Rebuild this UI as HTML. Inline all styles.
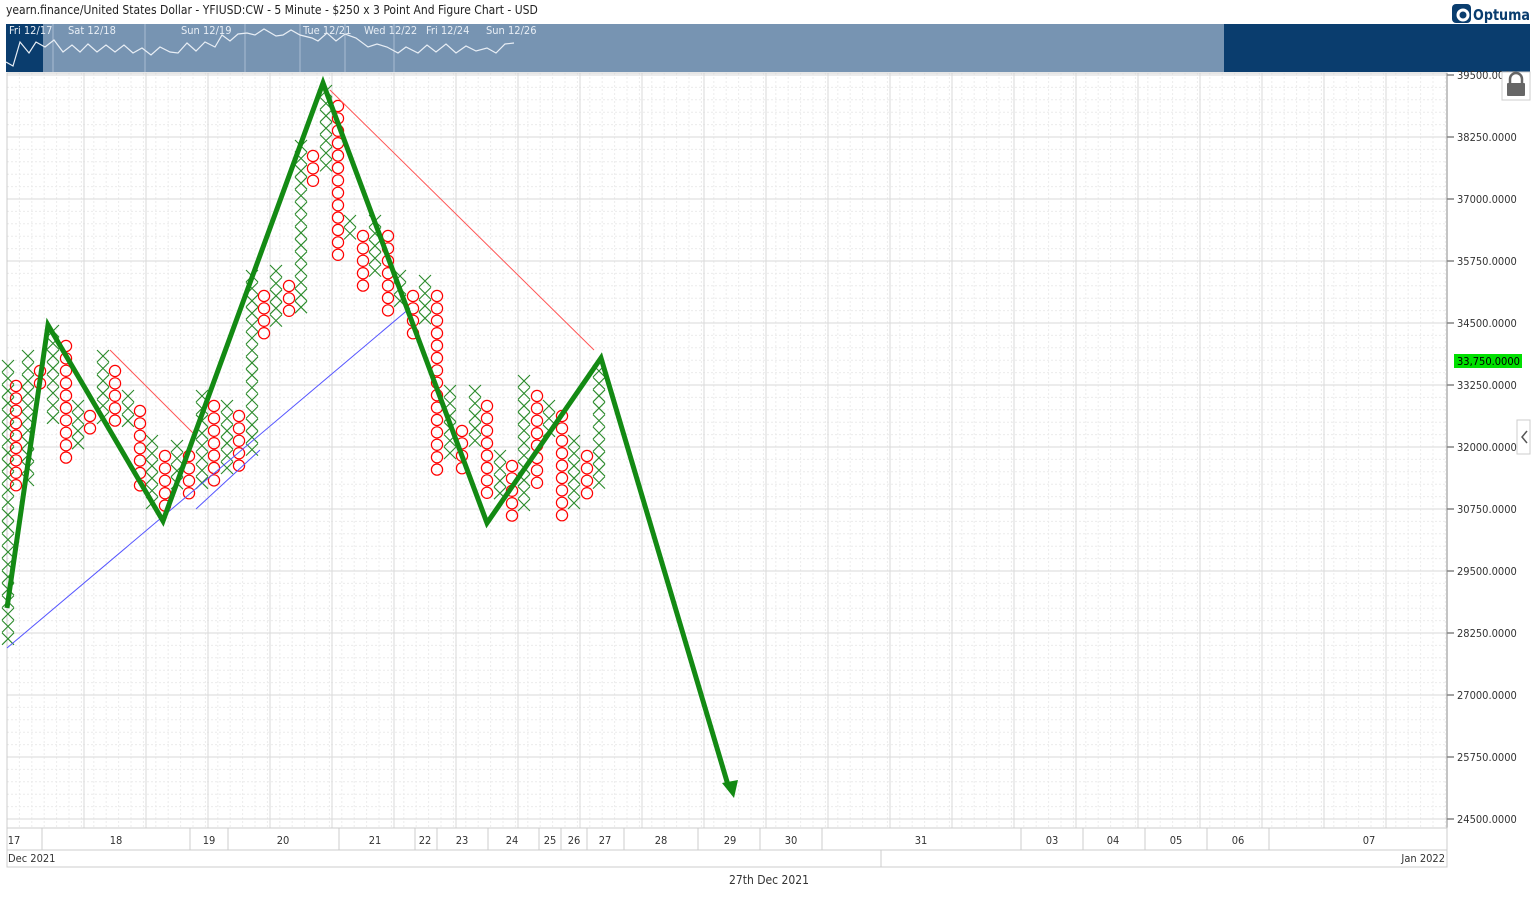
<!DOCTYPE html>
<html><head><meta charset="utf-8"><style>
body{margin:0;width:1536px;height:899px;background:#fff;overflow:hidden;font-family:"DejaVu Sans Condensed","Liberation Sans",sans-serif;}
svg{position:absolute;left:0;top:0}
text{font-family:"DejaVu Sans Condensed","Liberation Sans",sans-serif;}
</style></head><body>
<svg id="s" width="1536" height="899" xmlns="http://www.w3.org/2000/svg">
<text x="6" y="14" font-size="12" fill="#222">yearn.finance/United States Dollar - YFIUSD:CW - 5 Minute - $250 x 3 Point And Figure Chart - USD</text>
<rect x="1452" y="4" width="19" height="19" rx="4" fill="#0a3d6e"/>
<circle cx="1463" cy="15" r="5" fill="none" stroke="#fff" stroke-width="3"/>
<text x="1473" y="20" font-size="15" fill="#0a3d6e" font-weight="bold" textLength="57" lengthAdjust="spacingAndGlyphs">Optuma</text>
<rect x="6" y="24" width="1524" height="48" fill="#7794b2"/>
<rect x="6" y="24" width="37" height="48" fill="#0a3d6e"/>
<rect x="1224" y="24" width="306" height="48" fill="#0a3d6e"/>
<g stroke="#a9bdd2" stroke-width="1"><line x1="53" y1="24" x2="53" y2="72"/><line x1="145" y1="24" x2="145" y2="72"/><line x1="245" y1="24" x2="245" y2="72"/><line x1="300" y1="24" x2="300" y2="72"/><line x1="345" y1="24" x2="345" y2="72"/><line x1="394" y1="24" x2="394" y2="72"/></g>
<g font-size="11" fill="#e8eef5"><text x="9" y="34">Fri 12/17</text><text x="68" y="34">Sat 12/18</text><text x="181" y="34">Sun 12/19</text><text x="303" y="34">Tue 12/21</text><text x="364" y="34">Wed 12/22</text><text x="426" y="34">Fri 12/24</text><text x="486" y="34">Sun 12/26</text></g>
<polyline fill="none" stroke="#e8eef5" stroke-width="1.2" points="6,62 13,66 20,42 29,53 36,42 45,47 54,40 63,52 72,45 80,52 88,44 97,52 106,45 115,52 124,45 133,53 142,48 151,55 160,47 170,52 178,53 187,43 196,51 205,42 215,47 222,35 230,41 238,34 247,33 255,35 264,29 276,36 283,35 291,30 300,35 312,38 318,41 327,33 336,41 345,34 356,38 368,47 377,44 387,47 398,53 406,47 418,53 427,45 436,52 446,44 456,53 466,46 476,51 487,48 496,53 505,44 514,43"/>
<g id="g"></g>
</svg>
<script>
const s=document.getElementById('g');let h='';
const X0=7,X1=1447,Y0=73,Y1=828;
for(let x=X0+12.4;x<X1;x+=12.4)h+=`<line x1="${x}" y1="${Y0}" x2="${x}" y2="${Y1}" stroke="#ececec" stroke-dasharray="2,2"/>`;
for(let y=75+12.4;y<Y1;y+=12.4)h+=`<line x1="${X0}" y1="${y}" x2="${X1}" y2="${y}" stroke="#ececec" stroke-dasharray="2,2"/>`;
for(let x=84;x<X1;x+=62)h+=`<line x1="${x}" y1="${Y0}" x2="${x}" y2="${Y1}" stroke="#dadada"/>`;
for(let i=0;i<13;i++){let y=75+i*62;h+=`<line x1="${X0}" y1="${y}" x2="${X1}" y2="${y}" stroke="#dadada"/><line x1="1447" y1="${y}" x2="1454" y2="${y}" stroke="#444"/><text x="1457" y="${y+4}" font-size="11" fill="#333">${(39500-i*1250).toLocaleString('en-US').replace(',','')}.0000</text>`;}
h+=`<rect x="${X0}" y="${Y0}" width="${X1-X0}" height="${Y1-Y0}" fill="none" stroke="#ccc"/>`;
h+=`<line x1="1447" y1="73" x2="1447" y2="828" stroke="#888"/>`;
const cols=[[8,1,360,640],[16,0,380,490],[28,1,350,480],[40,0,365,395],[53,1,325,420],[66,0,340,465],[78,1,400,455],[90,0,410,440],[103,1,350,430],[115,0,365,430],[128,1,390,425],[140,0,405,490],[152,1,435,505],[165,0,450,515],[177,1,440,495],[189,0,450,505],[202,1,390,490],[214,0,400,490],[227,1,400,480],[239,0,410,470],[252,1,270,460],[264,0,290,340],[276,1,265,330],[289,0,280,320],[301,1,140,310],[313,0,150,185],[326,1,85,170],[338,0,100,255],[350,1,215,245],[363,0,230,295],[375,1,215,280],[388,0,230,320],[400,1,270,305],[413,0,290,345],[425,1,275,330],[437,0,290,470],[450,1,385,460],[462,0,425,470],[475,1,385,445],[487,0,400,505],[500,1,450,505],[512,0,460,520],[524,1,375,505],[537,0,390,490],[549,1,400,440],[562,0,410,520],[574,1,435,505],[587,0,450,495],[599,1,365,485]];
for(const [x,t,a,b] of cols){for(let y=a+6;y<=b;y+=12.4){if(t){h+=`<path d="M${x-6} ${y-6}L${x+6} ${y+6}M${x+6} ${y-6}L${x-6} ${y+6}" stroke="#2a8a2a" stroke-width="1.1"/>`}else{h+=`<circle cx="${x}" cy="${y}" r="5.6" fill="none" stroke="#f00" stroke-width="1.2"/>`}}}
h+=`<line x1="330" y1="90" x2="594" y2="350" stroke="#f55"/><line x1="110" y1="350" x2="195" y2="435" stroke="#f55"/>`;
h+=`<line x1="7" y1="648" x2="410" y2="308" stroke="#55f"/><line x1="196" y1="509" x2="260" y2="450" stroke="#55f"/>`;
h+=`<polyline fill="none" stroke="#138a13" stroke-width="5" stroke-linejoin="miter" points="7,608 48,325 163,521 323,83 487,523 601,358 728,785"/><path d="M722 783L734 798L738 780Z" fill="#138a13"/>`;
h+=`<rect x="1454" y="354" width="68" height="14" fill="#00e000"/><text x="1457" y="365" font-size="11" fill="#000">33,750.0000</text>`;
h+=`<rect x="1502" y="72" width="28" height="28" fill="#fff" stroke="#ccc"/><rect x="1507" y="83" width="18" height="13" rx="1" fill="#666"/><path d="M1510 83v-4a6 6 0 0 1 12 0v4" fill="none" stroke="#666" stroke-width="2.5"/>`;
h+=`<rect x="1517" y="420" width="13" height="34" fill="#fff" stroke="#ccc"/><path d="M1527 431l-5 6 5 6" fill="none" stroke="#555" stroke-width="1.5"/>`;
h+=`<rect x="7" y="828" width="1440" height="39" fill="#fff" stroke="#ccc"/><line x1="7" y1="850" x2="1447" y2="850" stroke="#ccc"/><line x1="881" y1="850" x2="881" y2="867" stroke="#ccc"/>`;
for(const x of [42,190,228,339,415,437,488,539,561,587,624,698,760,822,1021,1083,1145,1207,1269])h+=`<line x1="${x}" y1="828" x2="${x}" y2="850" stroke="#ccc"/>`;
const L=[[14,'17'],[116,'18'],[209,'19'],[283,'20'],[375,'21'],[425,'22'],[462,'23'],[512,'24'],[550,'25'],[574,'26'],[605,'27'],[661,'28'],[730,'29'],[791,'30'],[921,'31'],[1052,'03'],[1113,'04'],[1176,'05'],[1238,'06'],[1369,'07']];
for(const [x,t] of L)h+=`<text x="${x}" y="844" font-size="11" fill="#333" text-anchor="middle">${t}</text>`;
h+=`<text x="8" y="862" font-size="11" fill="#333">Dec 2021</text><text x="1445" y="862" font-size="11" fill="#333" text-anchor="end">Jan 2022</text><text x="769" y="884" font-size="12" fill="#333" text-anchor="middle">27th Dec 2021</text>`;
s.innerHTML=h;
</script>
</body></html>
